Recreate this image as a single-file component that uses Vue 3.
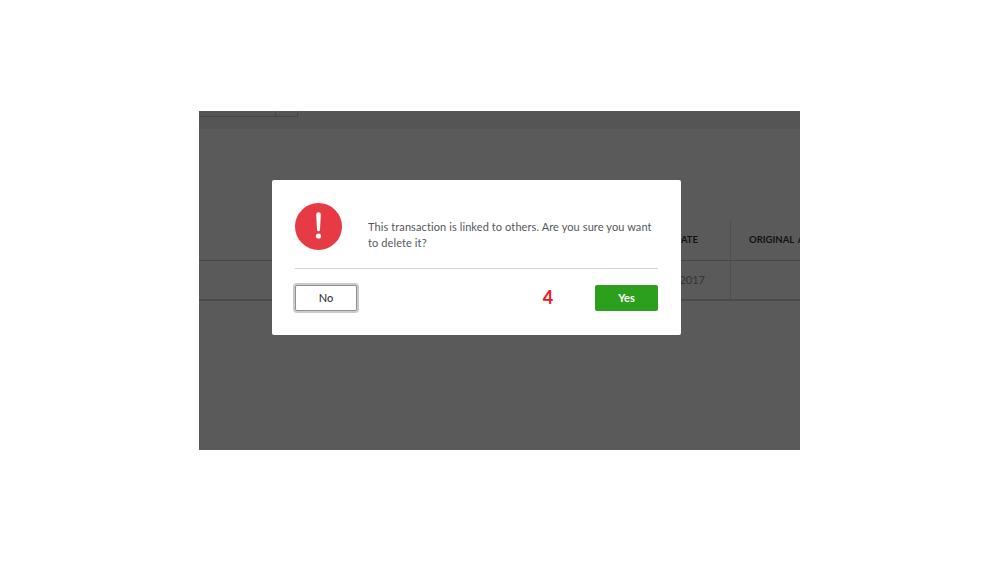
<script setup>
const message = 'This transaction is linked to others. Are you sure you want to delete it?';
</script>

<template>
  <div class="page">
    <div class="screen">
      <!-- dimmed page behind the dialog -->
      <div class="toolbar">
        <div class="field"></div>
        <div class="field-btn"></div>
      </div>
      <div class="table">
        <div class="head-row">
          <div class="cell date-head">DATE</div>
          <div class="cell amount-head">ORIGINAL AMOUNT</div>
        </div>
        <div class="body-row">
          <div class="cell date-val">01/01/2017</div>
          <div class="cell amount-val"></div>
        </div>
      </div>

      <div class="dialog">
        <div class="dialog-main">
          <svg class="alert-icon" width="47" height="47" viewBox="0 0 47 47">
            <circle cx="23.5" cy="23.5" r="23.5" fill="#e63b45" />
            <path d="M21.2 11.5a2.3 2.3 0 0 1 4.6 0l-.8 15.2a1.5 1.5 0 0 1-3 0z" fill="#fff" />
            <circle cx="23.5" cy="33" r="2.6" fill="#fff" />
          </svg>
          <p class="message">{{ message }}</p>
        </div>
        <div class="dialog-footer">
          <button type="button" class="btn-no">No</button>
          <span class="step">4</span>
          <button type="button" class="btn-yes">Yes</button>
        </div>
      </div>
    </div>
  </div>
</template>

<style>
html,
body {
  margin: 0;
  background: #fff;
}
</style>

<style scoped>
.page {
  width: 999px;
  height: 562px;
  padding: 111px 0 0 199px;
  box-sizing: border-box;
  overflow: hidden;
  font-family: Lato, "Open Sans", sans-serif;
}

.screen {
  position: relative;
  width: 601px;
  height: 339px;
  background: #5a5a5a;
  overflow: hidden;
}

.toolbar {
  display: flex;
  height: 18px;
  background: #555;
}

.field {
  width: 76px;
  height: 5px;
  border-right: 1px solid #474747;
  border-bottom: 1px solid #474747;
}

.field-btn {
  width: 21px;
  height: 5px;
  border-right: 1px solid #474747;
  border-bottom: 1px solid #474747;
}

.table {
  margin-top: 91px;
}

.head-row,
.body-row {
  display: grid;
  grid-template-columns: 532px 1fr;
  box-sizing: border-box;
}

.head-row {
  height: 41px;
  border-bottom: 1px solid #474747;
}

.body-row {
  height: 40px;
  border-bottom: 2px solid #4a4a4a;
}

.cell {
  display: flex;
  align-items: center;
  white-space: nowrap;
  overflow: hidden;
  padding-bottom: 2px;
}

.date-head,
.date-val {
  justify-content: flex-end;
  border-right: 1px solid #505050;
}

.date-head,
.amount-head {
  font-weight: 700;
  color: #111;
  font-size: 9.5px;
  word-spacing: 2px;
}

.date-head {
  padding-right: 32px;
}

.amount-head {
  padding-left: 18px;
}

.date-val {
  padding-right: 25px;
  color: #333;
  font-size: 11px;
}

.dialog {
  position: absolute;
  left: 73px;
  top: 69px;
  width: 409px;
  height: 155px;
  box-sizing: border-box;
  padding: 23px 23px 0;
  background: #fff;
  border-radius: 2px;
}

.dialog-main {
  display: flex;
  align-items: center;
  gap: 26px;
  height: 65px;
  border-bottom: 1px solid #d4d4d4;
}

.alert-icon {
  flex: none;
  margin-top: -18px;
}

.message {
  margin: -1px 0 0;
  font-size: 11px;
  line-height: 16px;
  letter-spacing: 0.1px;
  color: #55575a;
}

.dialog-footer {
  display: flex;
  align-items: center;
  justify-content: space-between;
  margin-top: 16px;
}

.btn-no,
.btn-yes {
  height: 26px;
  padding: 0 0 2px;
  border-radius: 2px;
  font-family: inherit;
  font-size: 11px;
  cursor: pointer;
}

.btn-no {
  width: 62px;
  background: #fff;
  color: #393a3d;
  font-weight: 500;
  border: 1px solid #8d9096;
  box-shadow: 0 0 0 2px #c8cacc;
}

.btn-yes {
  width: 63px;
  background: #2ca01c;
  color: #fff;
  font-weight: 700;
  border: none;
}

.step {
  margin-left: 144px;
  margin-top: -2px;
  font-size: 18px;
  font-weight: 700;
  color: #f0141e;
}
</style>
